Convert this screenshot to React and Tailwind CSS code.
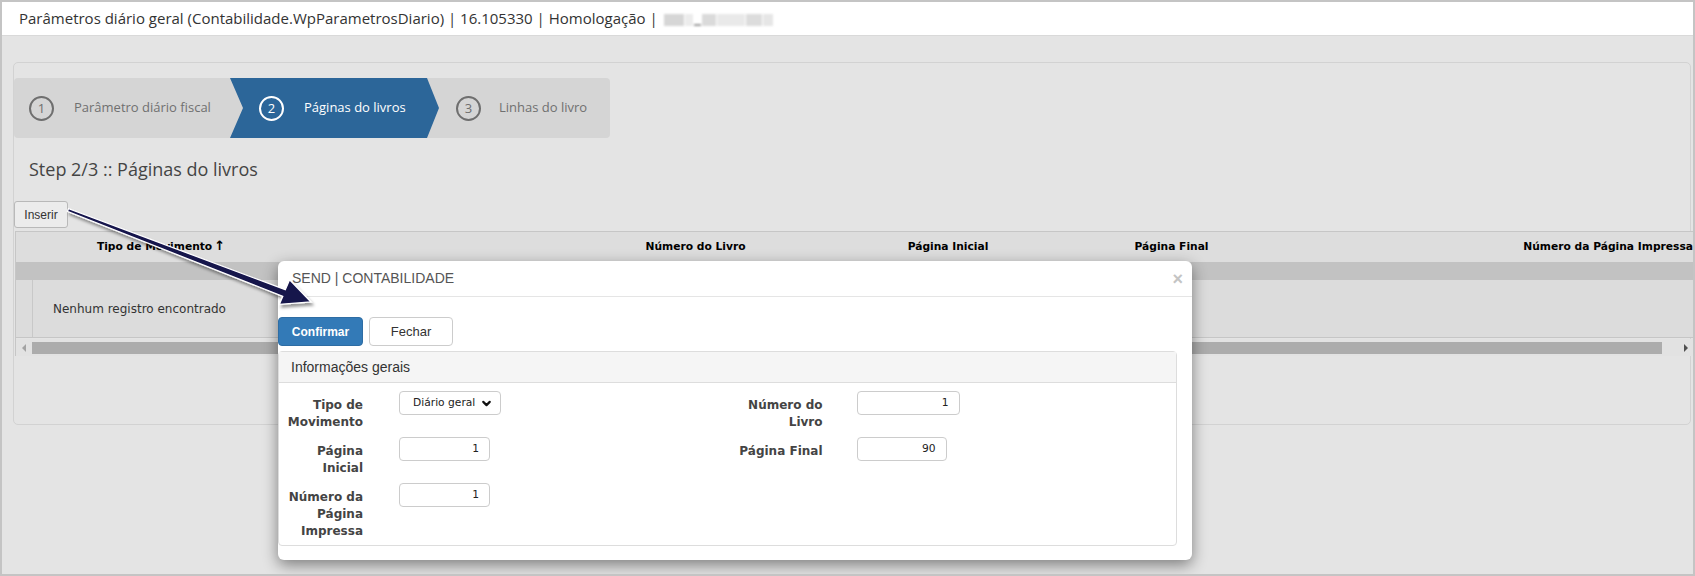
import { ChevronDown } from 'lucide-react';

const verdana = "font-['DejaVu_Sans',Verdana,sans-serif]";
const arial = "font-['Liberation_Sans',Arial,sans-serif]";

function StepCircle({ n, active }) {
  return (
    <div
      className={
        'w-[25px] h-[25px] rounded-full border-2 flex items-center justify-center text-[13px] leading-none shrink-0 ' +
        (active ? 'border-white text-white' : 'border-[#6f6f6f] text-[#6f6f6f]')
      }
    >
      {n}
    </div>
  );
}

function Wizard() {
  return (
    <div className="flex w-[596px] h-[60px] rounded-[4px] bg-[#d5d5d5] overflow-hidden">
      <div className="w-[216px] flex items-center gap-[20px] pl-[15px]">
        <StepCircle n="1" />
        <span className="text-[13px] text-[#707070]">Parâmetro diário fiscal</span>
      </div>
      <div className="w-[209px] flex items-center gap-[20px] pl-[29px] bg-[#2c6699] [clip-path:polygon(0_0,calc(100%-12px)_0,100%_50%,calc(100%-12px)_100%,0_100%,13px_50%)]">
        <StepCircle n="2" active />
        <span className="text-[13px] text-white">Páginas do livros</span>
      </div>
      <div className="flex-1 -ml-[12px] flex items-center gap-[18px] pl-[29px]">
        <StepCircle n="3" />
        <span className="text-[13px] text-[#707070]">Linhas do livro</span>
      </div>
    </div>
  );
}

function DataTable() {
  return (
    <div className={'ml-px w-[1690px] border-t border-l border-[#c6c6c6] ' + verdana}>
      <div className="h-[30px] flex items-center bg-[#dddddd] text-[10.7px] font-bold text-black">
        <div className="w-[290px] text-center">Tipo de Movimento<span className="ml-[2px] text-[13px] leading-none">↑</span></div>
        <div className="w-[489px] pl-[290px] text-center">Número do Livro</div>
        <div className="w-[306px] text-center">Página Inicial</div>
        <div className="w-[141px] text-center">Página Final</div>
        <div className="w-[451px] text-right">Número da Página Impressa</div>
      </div>
      <div className="h-[18px] bg-[#c2c2c2]" />
      <div className="h-[58px] flex bg-[#dcdcdc] border-b border-[#c6c6c6]">
        <div className="w-[17px] border-r border-[#c8c8c8]" />
        <div className="flex items-center pl-[20px] text-[12px] text-[#333]">Nenhum registro encontrado</div>
      </div>
      <div className="h-[17px] flex items-center bg-[#e2e2e2] mt-px">
        <div className="w-[16px] flex justify-center">
          <span className="w-0 h-0 border-y-[4px] border-y-transparent border-r-[4px] border-r-[#a3a3a3]" />
        </div>
        <div className="w-[1630px] h-[12px] bg-[#acacac]" />
        <div className="flex-1 flex pl-[22px]">
          <span className="w-0 h-0 border-y-[4px] border-y-transparent border-l-[4px] border-l-[#505050]" />
        </div>
      </div>
    </div>
  );
}

function Field({ label, labelW, gap, children }) {
  return (
    <div className="flex items-start">
      <div
        className={'text-right font-bold text-[12px] leading-[17px] pt-[6px] text-[#444] ' + verdana}
        style={{ width: labelW, marginRight: gap }}
      >
        {label}
      </div>
      {children}
    </div>
  );
}

function NumInput({ value, w }) {
  return (
    <div
      className={'h-[24px] border border-[#cccccc] rounded-[4px] bg-white flex items-center justify-end pr-[10px] text-[10.7px] text-[#222] ' + verdana}
      style={{ width: w }}
    >
      {value}
    </div>
  );
}

function Modal() {
  return (
    <div className={'absolute left-[276px] top-[259px] w-[914px] h-[299px] bg-white rounded-[6px] shadow-[0_5px_15px_rgba(0,0,0,0.45)] ' + arial}>
      <div className="h-[36px] border-b border-[#e5e5e5] flex items-center justify-between pl-[14px] pr-[9px]">
        <span className="text-[14px] text-[#555]">SEND | CONTABILIDADE</span>
        <span className="text-[18px] font-bold text-[#c4c4c4] leading-none">×</span>
      </div>
      <div className="mt-[20px] flex gap-[6px]">
        <button className="w-[85px] h-[29px] bg-[#337ab7] border border-[#2e6da4] rounded-[4px] text-white font-bold text-[12px]">Confirmar</button>
        <button className="w-[84px] h-[29px] bg-white border border-[#cccccc] rounded-[4px] text-[#333] text-[13px]">Fechar</button>
      </div>
      <div className="mt-[5px] w-[899px] h-[195px] border border-[#dddddd] rounded-[4px]">
        <div className="h-[31px] bg-[#f5f5f5] border-b border-[#dddddd] flex items-center pl-[12px] text-[14px] text-[#333]">Informações gerais</div>
        <div className="grid grid-cols-2 pt-[8px]">
          <div className="flex flex-col gap-[6px] pl-[2px]">
            <Field label="Tipo de Movimento" labelW={82} gap={36}>
              <div className={'w-[102px] h-[24px] border border-[#cccccc] rounded-[4px] flex items-center justify-between pl-[13px] pr-[7px] text-[10.7px] text-[#222] ' + verdana}>
                <span>Diário geral</span>
                <ChevronDown size={13} strokeWidth={4} className="text-[#111]" />
              </div>
            </Field>
            <Field label="Página Inicial" labelW={82} gap={36}>
              <NumInput value="1" w={91} />
            </Field>
            <Field label="Número da Página Impressa" labelW={82} gap={36}>
              <NumInput value="1" w={91} />
            </Field>
          </div>
          <div className="flex flex-col gap-[6px]">
            <Field label="Número do Livro" labelW={95} gap={34}>
              <NumInput value="1" w={103} />
            </Field>
            <Field label="Página Final" labelW={95} gap={34}>
              <NumInput value="90" w={90} />
            </Field>
          </div>
        </div>
      </div>
    </div>
  );
}

function Arrow() {
  return (
    <svg className="absolute -left-[2px] -top-[2px] pointer-events-none" width="1695" height="576" viewBox="0 0 1695 576">
      <defs>
        <filter id="arrowShadow" x="-10%" y="-10%" width="120%" height="140%">
          <feDropShadow dx="2" dy="3" stdDeviation="1.8" floodColor="#000" floodOpacity="0.4" />
        </filter>
      </defs>
      <polygon
        points="68.6,208.6 285.3,289.7 289.6,279.7 311,302 279.4,304.3 282.8,296.3 67.4,211.4"
        fill="#14124c"
        stroke="#ffffff"
        strokeWidth="1.3"
        strokeLinejoin="miter"
        filter="url(#arrowShadow)"
      />
    </svg>
  );
}

export default function App() {
  return (
    <div className="relative w-[1695px] h-[576px] overflow-hidden border-2 border-[#c4c4c4] bg-[#e4e4e4] font-['Open_Sans',sans-serif]">
      <div className="h-[34px] bg-white border-b border-[#d9d9d9] flex items-center pl-[17px] text-[15px] text-[#333]">
        <span>Parâmetros diário geral (Contabilidade.WpParametrosDiario) | 16.105330 | Homologação |</span>
        <span className="ml-[6px] flex items-end gap-[1px] h-[14px] blur-[1px]">
          <span className="w-[20px] h-[12px] bg-[#d6d6d6]" />
          <span className="w-[8px] h-[12px] bg-[#ececec]" />
          <span className="w-[7px] h-[2px] bg-[#9a9a9a]" />
          <span className="w-[14px] h-[12px] bg-[#dadada]" />
          <span className="w-[28px] h-[12px] bg-[#e9e9e9]" />
          <span className="w-[16px] h-[12px] bg-[#dcdcdc]" />
          <span className="w-[10px] h-[12px] bg-[#e6e6e6]" />
        </span>
      </div>

      <div className="ml-[11px] mt-[26px] w-[1678px] h-[363px] border border-[#d2d2d2] rounded-[5px] pt-[15px]">
        <Wizard />
        <div className="mt-[19px] pl-[15px] text-[18px] leading-[24px] text-[#444]">Step 2/3 :: Páginas do livros</div>
        <button className={'mt-[20px] w-[54px] h-[27px] border border-[#b9b9b9] rounded-[3px] bg-[#ececec] text-[12px] text-[#333] ' + arial}>Inserir</button>
        <div className="mt-[3px]">
          <DataTable />
        </div>
      </div>

      <Modal />
      <Arrow />
    </div>
  );
}
